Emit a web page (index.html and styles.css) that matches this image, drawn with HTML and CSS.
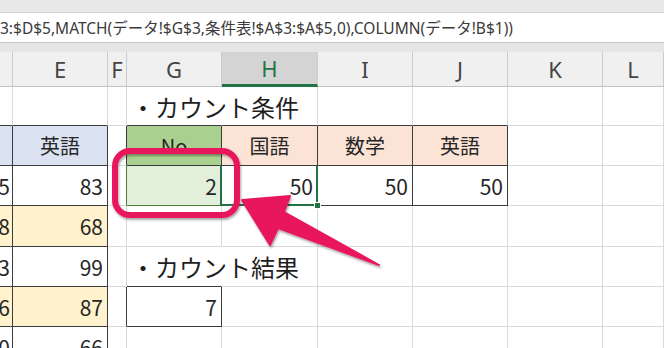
FILE: index.html
```html
<!DOCTYPE html>
<html lang="ja">
<head>
  <meta charset="UTF-8">
  <meta name="viewport" content="width=device-width, initial-scale=1.0">
  <title>カウント条件</title>
  <link rel="stylesheet" href="styles.css">
</head>
<body>

  <div class="app">
    <div class="ribbon-edge"></div>
    <div class="formula-bar">
      <span class="formula">3:$D$5,MATCH(データ!$G$3,条件表!$A$3:$A$5,0),COLUMN(データ!B$1))</span>
    </div>
    <div class="gap"></div>

    <div class="sheet">
      <!-- 列見出し -->
      <div class="c hd"></div>
      <div class="c hd">E</div>
      <div class="c hd">F</div>
      <div class="c hd">G</div>
      <div class="c hd sel">H</div>
      <div class="c hd">I</div>
      <div class="c hd">J</div>
      <div class="c hd">K</div>
      <div class="c hd">L</div>

      <!-- 1行目 -->
      <div class="c dk-b"></div>
      <div class="c dk-b"></div>
      <div class="c"></div>
      <div class="c dk-b spill title">・カウント条件</div>
      <div class="c dk-b"></div>
      <div class="c dk-b"></div>
      <div class="c dk-b"></div>
      <div class="c"></div>
      <div class="c"></div>

      <!-- 2行目 -->
      <div class="c blue dk-r dk-b"></div>
      <div class="c blue dk-r dk-b ctr">英語</div>
      <div class="c dk-r"></div>
      <div class="c green dk-r dk-b ctr">No</div>
      <div class="c pink dk-r dk-b ctr">国語</div>
      <div class="c pink dk-r dk-b ctr">数学</div>
      <div class="c pink dk-r dk-b ctr">英語</div>
      <div class="c"></div>
      <div class="c"></div>

      <!-- 3行目 -->
      <div class="c dk-r dk-b r cut">5</div>
      <div class="c dk-r dk-b r">83</div>
      <div class="c gr-r"></div>
      <div class="c lgreen gr-r gr-b r">2</div>
      <div class="c dk-r dk-b r active">50</div>
      <div class="c dk-r dk-b r">50</div>
      <div class="c dk-r dk-b r">50</div>
      <div class="c"></div>
      <div class="c"></div>

      <!-- 4行目 -->
      <div class="c yellow dk-r dk-b r cut">8</div>
      <div class="c yellow dk-r dk-b r">68</div>
      <div class="c"></div>
      <div class="c"></div>
      <div class="c"></div>
      <div class="c"></div>
      <div class="c"></div>
      <div class="c"></div>
      <div class="c"></div>

      <!-- 5行目 -->
      <div class="c dk-r dk-b r cut">3</div>
      <div class="c dk-r dk-b r">99</div>
      <div class="c"></div>
      <div class="c dk-b spill title">・カウント結果</div>
      <div class="c"></div>
      <div class="c"></div>
      <div class="c"></div>
      <div class="c"></div>
      <div class="c"></div>

      <!-- 6行目 -->
      <div class="c yellow dk-r dk-b r cut">6</div>
      <div class="c yellow dk-r dk-b r">87</div>
      <div class="c dk-r"></div>
      <div class="c dk-r dk-b r">7</div>
      <div class="c"></div>
      <div class="c"></div>
      <div class="c"></div>
      <div class="c"></div>
      <div class="c"></div>

      <!-- 7行目 -->
      <div class="c dk-r dk-b r cut">0</div>
      <div class="c dk-r dk-b r">66</div>
      <div class="c"></div>
      <div class="c"></div>
      <div class="c"></div>
      <div class="c"></div>
      <div class="c"></div>
      <div class="c"></div>
      <div class="c"></div>
    </div>

    <!-- 強調の枠と矢印 -->
    <svg class="marks" width="664" height="348" viewBox="0 0 664 348">
      <defs>
        <filter id="shadow" x="-20%" y="-20%" width="140%" height="140%">
          <feDropShadow dx="1" dy="2" stdDeviation="1.2" flood-color="#000" flood-opacity="0.35"/>
        </filter>
      </defs>
      <rect x="115" y="151" width="122" height="64" rx="15" fill="none" stroke="#e8175d" stroke-width="6" filter="url(#shadow)"/>
      <polygon points="242,200 290,196 284,212 379,265 278,228 270,245" fill="#e8175d" stroke="#e8175d" stroke-width="2" stroke-linejoin="round" filter="url(#shadow)"/>
    </svg>
  </div>

</body>
</html>
```

FILE: styles.css
```css
body {
  margin: 0;
  padding: 0;
  background-color: #ffffff;
  font-family: "Noto Sans CJK JP", "Noto Sans", sans-serif;
  color: #262626;
}
.app {
  position: relative;
  width: 664px;
  height: 348px;
  overflow: hidden;
}
.ribbon-edge {
  height: 12px;
  background-color: #e8e8e8;
}
.formula-bar {
  height: 29px;
  background-color: #ffffff;
  border-top: 1px solid #d4d4d4;
  border-bottom: 1px solid #c8c8c8;
  display: flex;
  align-items: center;
  overflow: hidden;
  white-space: nowrap;
}
.formula {
  font-family: "Noto Sans", "Noto Sans CJK JP", sans-serif;
  font-size: 15.5px;
  color: #3a3a3a;
  padding-left: 0;
}
.gap {
  height: 9px;
  background-color: #e6e6e6;
}
.sheet {
  display: grid;
  grid-template-columns: 13px 95px 19px 95px 96px 95px 95px 95px 1fr;
  grid-template-rows: 35px 39px 40px 40px 41px 40px 40px 40px;
}
.c {
  box-sizing: border-box;
  border-right: 1px solid #d9d9d9;
  border-bottom: 1px solid #d9d9d9;
  display: flex;
  align-items: center;
  padding: 0 4px;
  font-size: 21px;
  white-space: nowrap;
  min-width: 0;
}
.hd {
  background-color: #f0f0f0;
  border-right-color: #cbcbcb;
  border-bottom-color: #c4c4c4;
  justify-content: center;
  font-family: "Noto Sans", sans-serif;
  font-size: 22px;
  color: #444;
}
.hd.sel {
  background-color: #d4d4d4;
  border-bottom: 3px solid #217346;
  color: #217346;
}
.r {
  justify-content: flex-end;
}
.ctr {
  justify-content: center;
  font-size: 20px;
}
.cut {
  overflow: hidden;
  padding: 0 2px 0 0;
}
.title {
  font-size: 24px;
  padding-left: 4px;
  color: #1e1e1e;
}
.spill {
  border-right-color: transparent;
  overflow: visible;
}
.dk-r { border-right-color: #3c3c3c; }
.dk-b { border-bottom-color: #3c3c3c; }
.gr-r { border-right-color: #4f7a35; }
.gr-b { border-bottom-color: #4f7a35; }
.blue { background-color: #dae2f1; }
.yellow { background-color: #fff2cc; }
.green { background-color: #a9d08e; }
.lgreen { background-color: #e2efda; }
.pink { background-color: #fbe3d6; }
.active {
  position: relative;
}
.active::after {
  content: "";
  position: absolute;
  left: -2px;
  top: -1px;
  right: -1px;
  bottom: -1px;
  border: 2px solid #217346;
  border-top-color: #3c3c3c;
  border-top-width: 1px;
}
.active::before {
  content: "";
  position: absolute;
  right: -4px;
  bottom: -4px;
  width: 5px;
  height: 5px;
  background-color: #217346;
  border: 1px solid #ffffff;
  z-index: 1;
}
.marks {
  position: absolute;
  left: 0;
  top: 0;
  pointer-events: none;
}
```
